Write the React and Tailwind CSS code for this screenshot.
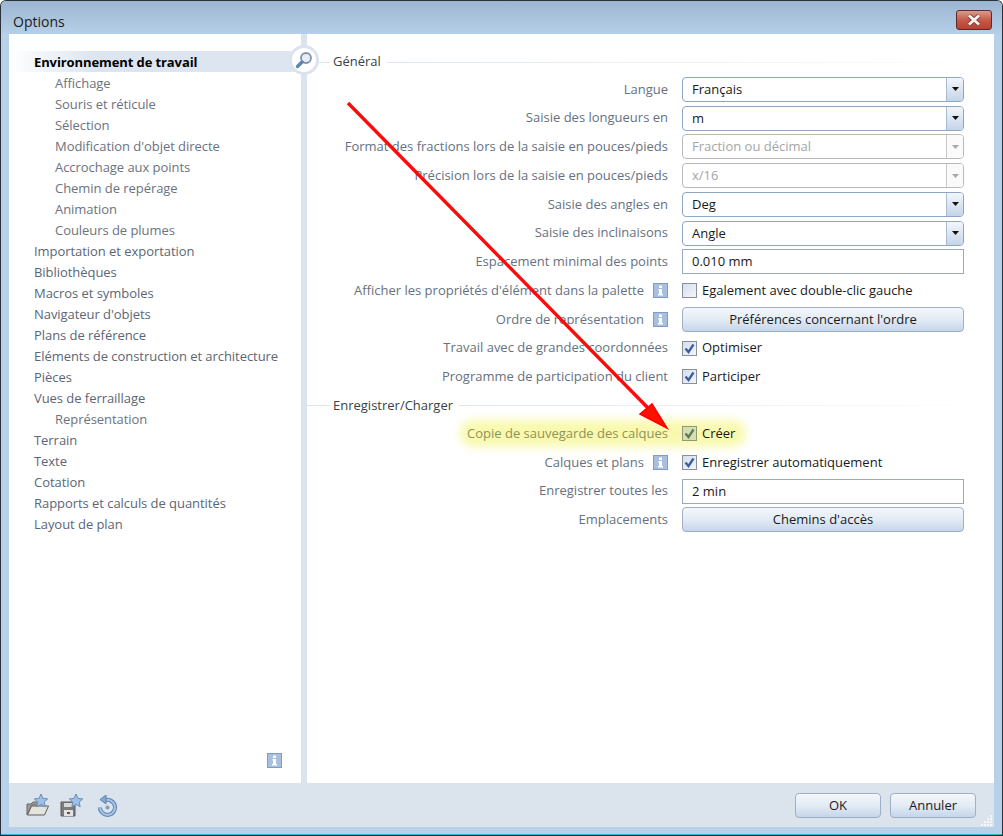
import React from 'react';

const TREE = [
  ['Environnement de travail', 0, true],
  ['Affichage', 1],
  ['Souris et réticule', 1],
  ['Sélection', 1],
  ["Modification d'objet directe", 1],
  ['Accrochage aux points', 1],
  ['Chemin de repérage', 1],
  ['Animation', 1],
  ['Couleurs de plumes', 1],
  ['Importation et exportation', 0],
  ['Bibliothèques', 0],
  ['Macros et symboles', 0],
  ["Navigateur d'objets", 0],
  ['Plans de référence', 0],
  ['Eléments de construction et architecture', 0],
  ['Pièces', 0],
  ['Vues de ferraillage', 0],
  ['Représentation', 1],
  ['Terrain', 0],
  ['Texte', 0],
  ['Cotation', 0],
  ['Rapports et calculs de quantités', 0],
  ['Layout de plan', 0],
];

const InfoIcon = () => (
  <svg width="15" height="15" viewBox="0 0 15 15" className="shrink-0">
    <rect x="0.5" y="0.5" width="14" height="14" fill="#a9bfe0" stroke="#7f9cc6" />
    <rect x="6" y="2.5" width="3" height="2.5" fill="#fff" />
    <path d="M5.5 6h3.5v5h1v1.5h-5V11h1V7.5h-.5z" fill="#fff" />
  </svg>
);

const Check = ({ checked = true, tint = false }) => (
  <div className={`w-[15px] h-[15px] shrink-0 border flex items-center justify-center ${tint ? 'border-[#8f9a76] bg-[#d5dfb0]' : 'border-[#8a8f98] bg-gradient-to-br from-[#d5dfee] to-[#f2f5fa]'}`}>
    {checked && (
      <svg width="13" height="13" viewBox="0 0 13 13">
        <path d="M2.5 6.5l3 3.5 5-7.5" fill="none" stroke={tint ? '#5d7a5a' : '#3a5f9e'} strokeWidth="2.3" />
      </svg>
    )}
  </div>
);

const Combo = ({ value, disabled }) => (
  <div className={`h-[25px] flex items-stretch rounded-[4px] border bg-white ${disabled ? 'border-[#b9b9b9]' : 'border-[#8fa5c2]'}`}>
    <span className={`flex-1 pl-[9px] leading-[23px] ${disabled ? 'text-[#a5a5a5]' : 'text-[#1a1a1a]'}`}>{value}</span>
    <div className={`w-[17px] border-l flex items-center justify-center rounded-r-[3px] ${disabled ? 'border-[#c8c8c8] bg-[#fafafa]' : 'border-[#a9bbd2] bg-gradient-to-b from-[#f3f6fa] to-[#c4d5e9]'}`}>
      <svg width="7" height="4" viewBox="0 0 7 4"><path d="M0 0h7L3.5 4z" fill={disabled ? '#a8a8a8' : '#111'} /></svg>
    </div>
  </div>
);

const TextBox = ({ value }) => (
  <div className="h-[25px] border border-[#9aa9bd] bg-white pl-[9px] leading-[23px] text-[#1a1a1a]">{value}</div>
);

const Btn = ({ children, className = '' }) => (
  <div className={`h-[25px] rounded-[4px] border border-[#9fb0c6] bg-gradient-to-b from-[#f4f7fb] via-[#e3ebf5] to-[#c5d6ea] text-center leading-[23px] text-[#1a1a1a] ${className}`}>{children}</div>
);

const CheckLine = ({ label, checked, tint }) => (
  <div className="flex items-center gap-[5px] text-[#1a1a1a]">
    <Check checked={checked} tint={tint} />
    <span>{label}</span>
  </div>
);

const Row = ({ label, info, children, glow }) => (
  <div className="relative h-[28.75px] flex items-center">
    {glow && <div className="absolute left-[153px] w-[286px] h-[27px] top-[1px] rounded-full bg-[#f9f9ae] blur-[5px]"></div>}
    <div className={`relative w-[361px] flex justify-end items-center gap-[9px] whitespace-nowrap ${glow ? 'text-[#8e935a]' : 'text-[#66717f]'}`}>
      <span>{label}</span>
      {info && <InfoIcon />}
    </div>
    <div className="relative ml-[14px] w-[282px]">{children}</div>
  </div>
);

const Section = ({ title }) => (
  <div className="flex items-center h-[20px] gap-[3px]">
    <div className="h-px w-[23px] bg-[#dde5ee]"></div>
    <span className="text-[#3a3f47]">{title}</span>
    <div className="flex-1 h-px bg-gradient-to-r from-[#dde5ee] to-white ml-[3px]"></div>
  </div>
);

export default function App() {
  return (
    <div className="relative w-[1003px] h-[836px] overflow-hidden flex flex-col bg-[#b8d1ea] border border-[#2a3138] border-b-0 rounded-t-[6px] text-[13px] font-['Open_Sans','Noto_Sans',sans-serif]">
      {/* Title bar */}
      <div className="h-[33px] shrink-0 flex items-center justify-between pl-[12px] pr-[10px] bg-gradient-to-b from-[#9cb6d2] to-[#b6cfe8]">
        <span className="text-[#1a1a1a] text-[14px] pt-[8px]">Options</span>
        <div className="w-[36px] h-[20px] mt-[4px] rounded-[3px] border border-[#5b2a2a] bg-gradient-to-b from-[#d99a8c] via-[#c65b48] to-[#b8402f] flex items-center justify-center">
          <svg width="16" height="12" viewBox="0 0 16 12">
            <path d="M3 1.5l10 9M13 1.5l-10 9" stroke="#6e3a36" strokeWidth="4.4" />
            <path d="M3 1.5l10 9M13 1.5l-10 9" stroke="#f4f0ef" strokeWidth="3" />
          </svg>
        </div>
      </div>

      {/* Body */}
      <div className="flex-1 min-h-0 mx-[8px] flex bg-white">
        <div className="relative w-[292px] shrink-0 pt-[17px] tracking-[-0.05px]">
          {TREE.map(([t, lvl, sel]) => (
            <div
              key={t}
              className={`h-[21px] leading-[21px] whitespace-nowrap ${lvl ? 'pl-[46px] text-[#6b7280]' : 'pl-[25px] text-[#5c6675]'} ${sel ? 'font-bold text-black bg-gradient-to-r from-white to-[#dce5f0] to-[30%] h-[20px] mb-px leading-[22px] tracking-[-0.1px]' : ''}`}
            >
              {t}
            </div>
          ))}
          <div className="absolute right-[19px] bottom-[15px]"><InfoIcon /></div>
        </div>
        <div className="w-[6px] shrink-0 bg-[#dbe4ee]"></div>
        <div className="flex-1 pt-[18px]">
          <Section title="Général" />
          <div className="mt-[3px]">
            <Row label="Langue"><Combo value="Français" /></Row>
            <Row label="Saisie des longueurs en"><Combo value="m" /></Row>
            <Row label="Format des fractions lors de la saisie en pouces/pieds"><Combo value="Fraction ou décimal" disabled /></Row>
            <Row label="Précision lors de la saisie en pouces/pieds"><Combo value="x/16" disabled /></Row>
            <Row label="Saisie des angles en"><Combo value="Deg" /></Row>
            <Row label="Saisie des inclinaisons"><Combo value="Angle" /></Row>
            <Row label="Espacement minimal des points"><TextBox value="0.010 mm" /></Row>
            <Row label="Afficher les propriétés d'élément dans la palette" info><CheckLine label="Egalement avec double-clic gauche" checked={false} /></Row>
            <Row label="Ordre de représentation" info><Btn>Préférences concernant l'ordre</Btn></Row>
            <Row label="Travail avec de grandes coordonnées"><CheckLine label="Optimiser" /></Row>
            <Row label="Programme de participation du client"><CheckLine label="Participer" /></Row>
          </div>
          <div className="mt-[4px]">
            <Section title="Enregistrer/Charger" />
          </div>
          <div className="mt-[4px]">
            <Row label="Copie de sauvegarde des calques" glow><CheckLine label="Créer" tint /></Row>
            <Row label="Calques et plans" info><CheckLine label="Enregistrer automatiquement" /></Row>
            <Row label="Enregistrer toutes les"><TextBox value="2 min" /></Row>
            <Row label="Emplacements"><Btn>Chemins d'accès</Btn></Row>
          </div>
        </div>
      </div>

      {/* Footer */}
      <div className="h-[44px] shrink-0 mx-[8px] bg-[#dbe3ed] flex items-center justify-between pl-[17px] pr-[18px] relative">
        <div className="flex items-center gap-[10px]">
          <svg width="24" height="24" viewBox="0 0 24 24">
            <path d="M1 22V11h4l2-2h6v3H6L1 22z" fill="#9c9c96" stroke="#666" />
            <path d="M1.5 22l4-9h17l-4 9z" fill="#e4e3dc" stroke="#5f5f5a" />
            <path d="M15 1l2 4.4 4.7.5-3.5 3.2 1 4.7-4.2-2.4-4.2 2.4 1-4.7-3.5-3.2 4.7-.5z" fill="#9cc0e8" stroke="#6c8cb4" />
          </svg>
          <svg width="24" height="24" viewBox="0 0 24 24">
            <path d="M1 9h11l3 3v11H1z" fill="#7c7c7c" stroke="#5a5a5a" />
            <rect x="4" y="10" width="8" height="4" fill="#d8d8d8" />
            <rect x="4" y="17" width="9" height="6" fill="#e2e2e2" />
            <rect x="7" y="19" width="3" height="2" fill="#555" />
            <path d="M16 1l2 4.4 4.7.5-3.5 3.2 1 4.7-4.2-2.4-4.2 2.4 1-4.7-3.5-3.2 4.7-.5z" fill="#9cc0e8" stroke="#6c8cb4" />
          </svg>
          <svg width="22" height="22" viewBox="0 0 22 22" className="ml-[3px] mt-[2px]">
            <path d="M7.5 5.5a7.5 7.5 0 1 1-4.5 7" fill="none" stroke="#5f83ad" strokeWidth="4" />
            <path d="M7.5 5.5a7.5 7.5 0 1 1-4.5 7" fill="none" stroke="#a9c6e6" strokeWidth="2" />
            <path d="M9 0v9L3 4.5z" fill="#86a8cf" stroke="#5f83ad" />
            <circle cx="10.5" cy="12.5" r="2" fill="#7e9cc0" />
          </svg>
        </div>
        <div className="flex gap-[9px]">
          <Btn className="w-[86px]">OK</Btn>
          <Btn className="w-[86px]">Annuler</Btn>
        </div>
        {/* Resize grip */}
        <svg width="13" height="13" viewBox="0 0 13 13" className="absolute right-[1px] bottom-0">
          <path d="M10 1h2v2h-2zM7 4h2v2H7zM10 4h2v2h-2zM4 7h2v2H4zM7 7h2v2H7zM10 7h2v2h-2zM1 10h2v2H1zM4 10h2v2H4zM7 10h2v2H7zM10 10h2v2h-2z" fill="#f4f7fa" />
        </svg>
      </div>
      <div className="h-[8px] shrink-0 border-b border-[#2bb8c8]"></div>
      <div className="h-px shrink-0 bg-[#222]"></div>

      {/* Search knob on the splitter */}
      <div className="absolute left-[288px] top-[44px] w-[30px] h-[30px] rounded-full bg-[#dbe4ee] flex items-center justify-center">
        <div className="w-[24px] h-[24px] rounded-full bg-white flex items-center justify-center">
          <svg width="20" height="20" viewBox="0 0 20 20">
            <circle cx="12" cy="8" r="5" fill="#e8eef5" stroke="#7f93aa" strokeWidth="1.8" />
            <path d="M8 12L3.5 16.5" stroke="#5f84b0" strokeWidth="3.4" strokeLinecap="round" />
          </svg>
        </div>
      </div>

      {/* Annotation arrow */}
      <svg width="1003" height="836" viewBox="0 0 1003 836" className="absolute left-[-1px] top-[-1px] pointer-events-none">
        <path d="M348 103L648 408" stroke="#ff0a0a" strokeWidth="3.4" />
        <path d="M667 428L640 414 652 404z" fill="#ff1000" stroke="#ff0000" strokeWidth="1.5" />
      </svg>
    </div>
  );
}
